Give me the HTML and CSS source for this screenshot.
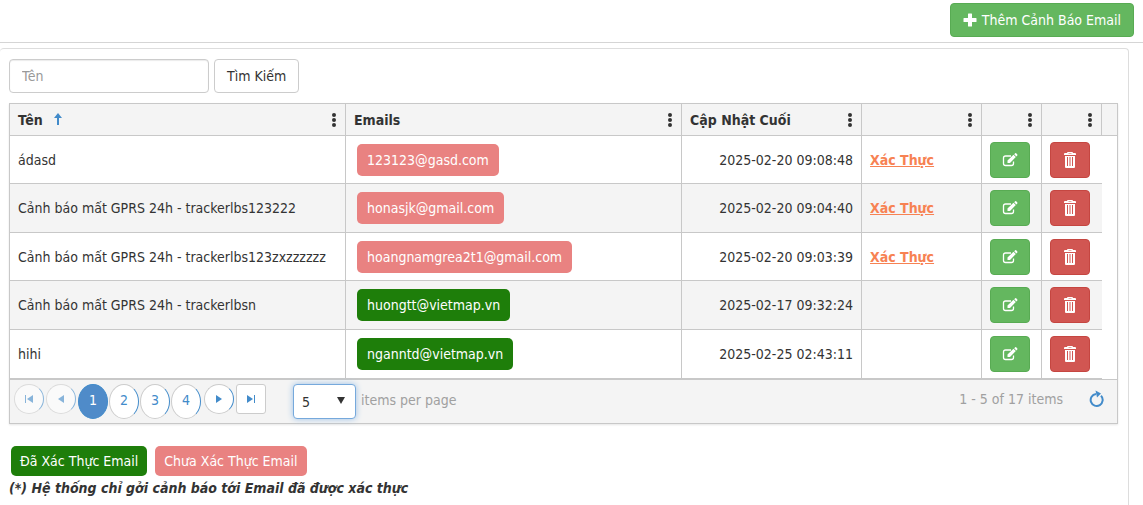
FILE: index.html
```html
<!DOCTYPE html>
<html lang="vi">
<head>
    <meta charset="UTF-8">
    <title>Cảnh Báo Email</title>
    <link rel="stylesheet" href="styles.css">
</head>
<body>
    <!-- shared icons -->
    <svg class="icon-defs" width="0" height="0">
        <symbol id="icon-dots" viewBox="0 0 6 14">
            <circle cx="3" cy="2" r="2"/>
            <circle cx="3" cy="7" r="2"/>
            <circle cx="3" cy="12" r="2"/>
        </symbol>
        <symbol id="icon-edit" viewBox="0 0 16 14">
            <path d="M9 3H3.5Q1.500 3 1.500 5V10.500Q1.500 12.500 3.500 12.500H9.500Q11.500 12.500 11.500 10.500V8.500" fill="none" stroke="currentColor" stroke-width="1.300"/>
            <path d="M5.500 10V7.500L11.500 1.800L13.800 4.100L8 10Z"/>
            <path d="M12.200 1.200L13.200 0.200Q13.700 -0.200 14.200 0.300L15.300 1.400Q15.700 1.900 15.300 2.400L14.400 3.400Z"/>
        </symbol>
        <symbol id="icon-trash" viewBox="0 0 14 16">
            <path d="M4 1Q4 0 5 0H9Q10 0 10 1H12Q13 1 13 2V3H1V2Q1 1 2 1ZM5.500 1V1.500H8.500V1Z" fill-rule="evenodd"/>
            <path d="M2 4H12V15Q12 16 11 16H3Q2 16 2 15ZM4 5V14H5V5ZM6.500 5V14H7.500V5ZM9 5V14H10V5Z" fill-rule="evenodd"/>
        </symbol>
    </svg>

    <div class="header">
        <button class="btn add-button">
            <svg width="14" height="14" viewBox="0 0 14 14"><path d="M5.500 0.500H8.500Q9 0.500 9 1V5H13Q13.500 5 13.500 5.500V8.500Q13.500 9 13 9H9V13Q9 13.500 8.500 13.500H5.500Q5 13.500 5 13V9H1Q0.500 9 0.500 8.500V5.500Q0.500 5 1 5H5V1Q5 0.500 5.500 0.500Z"/></svg>
            Thêm Cảnh Báo Email
        </button>
    </div>

    <div class="panel">
        <form class="search">
            <input type="text" class="search-input" placeholder="Tên" aria-label="Tên">
            <button type="button" class="btn search-button">Tìm Kiếm</button>
        </form>

        <div class="grid">
            <table>
                <colgroup>
                    <col>
                    <col>
                    <col class="col-date">
                    <col class="col-verify">
                    <col class="col-action">
                    <col class="col-action">
                    <col class="col-scroll">
                </colgroup>
                <thead>
                    <tr>
                        <th>
                            <div class="th-inner">
                                <a href="#" class="th-title">Tên <svg class="sort-icon" width="10" height="12" viewBox="0 0 10 12"><path d="M5 0L9 5H6V12H4V5H1Z"/></svg></a>
                                <button class="menu-button" aria-label="Menu"><svg width="6" height="14"><use href="#icon-dots"/></svg></button>
                            </div>
                        </th>
                        <th>
                            <div class="th-inner">
                                <a href="#" class="th-title">Emails</a>
                                <button class="menu-button" aria-label="Menu"><svg width="6" height="14"><use href="#icon-dots"/></svg></button>
                            </div>
                        </th>
                        <th>
                            <div class="th-inner">
                                <a href="#" class="th-title">Cập Nhật Cuối</a>
                                <button class="menu-button" aria-label="Menu"><svg width="6" height="14"><use href="#icon-dots"/></svg></button>
                            </div>
                        </th>
                        <th>
                            <div class="th-inner">
                                <button class="menu-button" aria-label="Menu"><svg width="6" height="14"><use href="#icon-dots"/></svg></button>
                            </div>
                        </th>
                        <th>
                            <div class="th-inner">
                                <button class="menu-button" aria-label="Menu"><svg width="6" height="14"><use href="#icon-dots"/></svg></button>
                            </div>
                        </th>
                        <th>
                            <div class="th-inner">
                                <button class="menu-button" aria-label="Menu"><svg width="6" height="14"><use href="#icon-dots"/></svg></button>
                            </div>
                        </th>
                        <th></th>
                    </tr>
                </thead>
                <tbody>
                    <tr>
                        <td>ádasd</td>
                        <td><span class="label unverified">123123@gasd.com</span></td>
                        <td class="date">2025-02-20 09:08:48</td>
                        <td><a href="#" class="verify-link">Xác Thực</a></td>
                        <td><button class="btn edit-button" aria-label="Sửa"><svg width="16" height="14"><use href="#icon-edit"/></svg></button></td>
                        <td><button class="btn delete-button" aria-label="Xóa"><svg width="14" height="16"><use href="#icon-trash"/></svg></button></td>
                        <td></td>
                    </tr>
                    <tr>
                        <td>Cảnh báo mất GPRS 24h - trackerlbs123222</td>
                        <td><span class="label unverified">honasjk@gmail.com</span></td>
                        <td class="date">2025-02-20 09:04:40</td>
                        <td><a href="#" class="verify-link">Xác Thực</a></td>
                        <td><button class="btn edit-button" aria-label="Sửa"><svg width="16" height="14"><use href="#icon-edit"/></svg></button></td>
                        <td><button class="btn delete-button" aria-label="Xóa"><svg width="14" height="16"><use href="#icon-trash"/></svg></button></td>
                        <td></td>
                    </tr>
                    <tr>
                        <td>Cảnh báo mất GPRS 24h - trackerlbs123zxzzzzzz</td>
                        <td><span class="label unverified">hoangnamgrea2t1@gmail.com</span></td>
                        <td class="date">2025-02-20 09:03:39</td>
                        <td><a href="#" class="verify-link">Xác Thực</a></td>
                        <td><button class="btn edit-button" aria-label="Sửa"><svg width="16" height="14"><use href="#icon-edit"/></svg></button></td>
                        <td><button class="btn delete-button" aria-label="Xóa"><svg width="14" height="16"><use href="#icon-trash"/></svg></button></td>
                        <td></td>
                    </tr>
                    <tr>
                        <td>Cảnh báo mất GPRS 24h - trackerlbsn</td>
                        <td><span class="label verified">huongtt@vietmap.vn</span></td>
                        <td class="date">2025-02-17 09:32:24</td>
                        <td></td>
                        <td><button class="btn edit-button" aria-label="Sửa"><svg width="16" height="14"><use href="#icon-edit"/></svg></button></td>
                        <td><button class="btn delete-button" aria-label="Xóa"><svg width="14" height="16"><use href="#icon-trash"/></svg></button></td>
                        <td></td>
                    </tr>
                    <tr>
                        <td>hihi</td>
                        <td><span class="label verified">nganntd@vietmap.vn</span></td>
                        <td class="date">2025-02-25 02:43:11</td>
                        <td></td>
                        <td><button class="btn edit-button" aria-label="Sửa"><svg width="16" height="14"><use href="#icon-edit"/></svg></button></td>
                        <td><button class="btn delete-button" aria-label="Xóa"><svg width="14" height="16"><use href="#icon-trash"/></svg></button></td>
                        <td></td>
                    </tr>
                </tbody>
            </table>

            <div class="pager">
                <div class="pager-nav">
                    <button class="page-arrow" disabled aria-label="Trang đầu"><svg width="8" height="8" viewBox="0 0 8 8"><path d="M0 0H1V8H0ZM8 0V8L2 4Z"/></svg></button>
                    <button class="page-arrow" disabled aria-label="Trang trước"><svg width="8" height="8" viewBox="0 0 8 8"><path d="M7 0V8L1 4Z"/></svg></button>
                    <div class="page-numbers">
                        <button class="page-number active">1</button>
                        <button class="page-number">2</button>
                        <button class="page-number">3</button>
                        <button class="page-number">4</button>
                    </div>
                    <button class="page-arrow" aria-label="Trang sau"><svg width="8" height="8" viewBox="0 0 8 8"><path d="M1 0V8L7 4Z"/></svg></button>
                    <button class="page-arrow page-last" aria-label="Trang cuối"><svg width="8" height="8" viewBox="0 0 8 8"><path d="M0 0V8L6 4ZM7 0H8V8H7Z"/></svg></button>
                </div>
                <div class="page-size">
                    <div class="select-wrap">
                        <select id="page-size">
                            <option>5</option>
                            <option>10</option>
                            <option>20</option>
                        </select>
                        <svg class="select-arrow" width="8" height="7" viewBox="0 0 8 7"><path d="M0 0H8L4 7Z"/></svg>
                    </div>
                    <label for="page-size">items per page</label>
                </div>
                <span class="pager-info">1 - 5 of 17 items</span>
                <button class="refresh-button" aria-label="Tải lại">
                    <svg width="16" height="17" viewBox="0 0 16 17"><path d="M13 5.800A6 6 0 1 1 8 4" fill="none" stroke="currentColor" stroke-width="2"/><path d="M7.500 0.500L13 3.500L9 7.500Z"/></svg>
                </button>
            </div>
        </div>

        <div class="legend">
            <span class="label verified">Đã Xác Thực Email</span>
            <span class="label unverified">Chưa Xác Thực Email</span>
        </div>
        <p class="note">(*) Hệ thống chỉ gởi cảnh báo tới Email đã được xác thực</p>
    </div>
</body>
</html>
```
FILE: styles.css
```css
* {
    margin: 0;
    padding: 0;
    box-sizing: border-box;
}

body {
    display: flex;
    flex-direction: column;
    min-height: 100vh;
    background-color: #ffffff;
    color: #333333;
    font-family: Tahoma, "DejaVu Sans Condensed", "Noto Sans", sans-serif;
    font-size: 14px;
    line-height: 20px;
}

button, input, select {
    font: inherit;
    color: inherit;
}

button {
    cursor: pointer;
}

svg {
    fill: currentColor;
}

.icon-defs {
    position: absolute;
}

.header {
    display: flex;
    justify-content: flex-end;
    padding: 3px 9px 5px;
    border-bottom: 1px solid #d5d5d5;
}

.btn {
    display: inline-flex;
    align-items: center;
    justify-content: center;
    gap: 5px;
    border: 1px solid #cccccc;
    border-radius: 4px;
    background-color: #ffffff;
    padding: 6px 12px;
}

.add-button, .edit-button {
    background-color: #64b75f;
    border-color: #58ab53;
    color: #ffffff;
}

.delete-button {
    background-color: #d15652;
    border-color: #c54641;
    color: #ffffff;
}

.edit-button, .delete-button {
    width: 40px;
    height: 36px;
    padding: 0;
    vertical-align: middle;
}

.panel {
    flex: 1;
    margin: 5px 14px 0 0;
    padding: 10px 10px 0 9px;
    border: 1px solid #dddddd;
    border-width: 1px 1px 0 0;
    border-radius: 4px 4px 0 0;
}

.search {
    display: flex;
    gap: 5px;
    margin-bottom: 10px;
}

.search-input {
    width: 200px;
    height: 34px;
    padding: 6px 12px;
    border: 1px solid #cccccc;
    border-radius: 4px;
    box-shadow: inset 0 1px 1px rgba(0, 0, 0, 0.08);
}

.search-input::placeholder {
    color: #999999;
}

.search-button {
    height: 34px;
}

.grid {
    border: 1px solid #c8c8c8;
    box-shadow: 0 1px 2px rgba(0, 0, 0, 0.1);
}

table {
    width: 100%;
    table-layout: fixed;
    border-collapse: separate;
    border-spacing: 0;
}

.col-date {
    width: 180px;
}

.col-verify {
    width: 120px;
}

.col-action {
    width: 60px;
}

.col-scroll {
    width: 15px;
}

th {
    height: 32px;
    padding: 0 8px;
    background-color: #f4f4f4;
    border-right: 1px solid #c8c8c8;
    border-bottom: 1px solid #c8c8c8;
    text-align: left;
}

th:last-child {
    padding: 0;
    border-right: none;
}

.th-inner {
    display: flex;
    align-items: center;
}

.th-title {
    color: #333333;
    text-decoration: none;
}

.sort-icon {
    margin-left: 6px;
    color: #428bca;
}

.menu-button {
    display: flex;
    margin-left: auto;
    border: none;
    background: none;
}

td {
    height: 48px;
    padding: 0 8px;
    border-right: 1px solid #c8c8c8;
    border-bottom: 1px solid #c8c8c8;
}

tbody tr:nth-child(even) td, tbody tr:last-child td {
    height: 49px;
}

tbody tr:nth-child(even) td:not(:last-child) {
    background-color: #f4f4f4;
}

td:nth-child(n+6) {
    border-right: none;
}

tbody td:last-child {
    padding: 0;
    border-bottom: none;
}

.date {
    text-align: right;
}

.label {
    display: inline-block;
    padding: 6px 10px;
    border-radius: 5px;
    color: #ffffff;
}

td .label {
    margin-left: 3px;
}

.verified {
    background-color: #1e7e0a;
}

.unverified {
    background-color: #e98281;
}

.verify-link {
    color: #f78253;
    font-weight: bold;
}

.pager {
    display: flex;
    align-items: center;
    padding: 4px 13px 4px 4px;
    border-top: 1px solid #c8c8c8;
    background-color: #f4f4f4;
    color: #a0a0a0;
}

.pager-nav {
    display: flex;
    gap: 2px;
}

.page-numbers {
    display: flex;
    gap: 1px;
    margin-right: 1px;
}

.page-arrow, .page-number {
    display: flex;
    align-items: center;
    justify-content: center;
    width: 30px;
    height: 30px;
    border: 1px solid #cccccc;
    border-right-color: #428bca;
    border-radius: 50%;
    background-color: #ffffff;
    color: #428bca;
}

.page-number {
    height: 35px;
    padding-bottom: 4px;
}

.page-number.active {
    border-color: #428bca;
    background-color: #4f8bc9;
    color: #ffffff;
}

.page-arrow:disabled {
    opacity: 0.6;
}

.page-last {
    border-color: #cccccc;
    border-radius: 3px;
}

.page-size {
    display: flex;
    align-items: center;
    gap: 5px;
    margin-left: 27px;
}

.page-size label {
    padding-bottom: 4px;
}

.select-wrap {
    position: relative;
    display: flex;
}

.page-size select {
    width: 63px;
    height: 35px;
    padding: 0 8px;
    appearance: none;
    border: 1px solid #76a9dc;
    border-radius: 4px;
    background-color: #ffffff;
    box-shadow: 0 0 6px #9cc0e6;
    color: #333333;
}

.select-arrow {
    position: absolute;
    top: 13px;
    right: 11px;
    color: #333333;
    pointer-events: none;
}

.pager-info {
    margin-left: auto;
    padding-bottom: 6px;
}

.refresh-button {
    display: flex;
    margin-left: 25px;
    padding-bottom: 6px;
    border: none;
    background: none;
    color: #428bca;
}

.legend {
    display: flex;
    gap: 8px;
    margin: 22px 2px 2px;
}

.legend .label {
    padding: 5px 9px;
}

.note {
    font-weight: bold;
    font-style: italic;
}
```
